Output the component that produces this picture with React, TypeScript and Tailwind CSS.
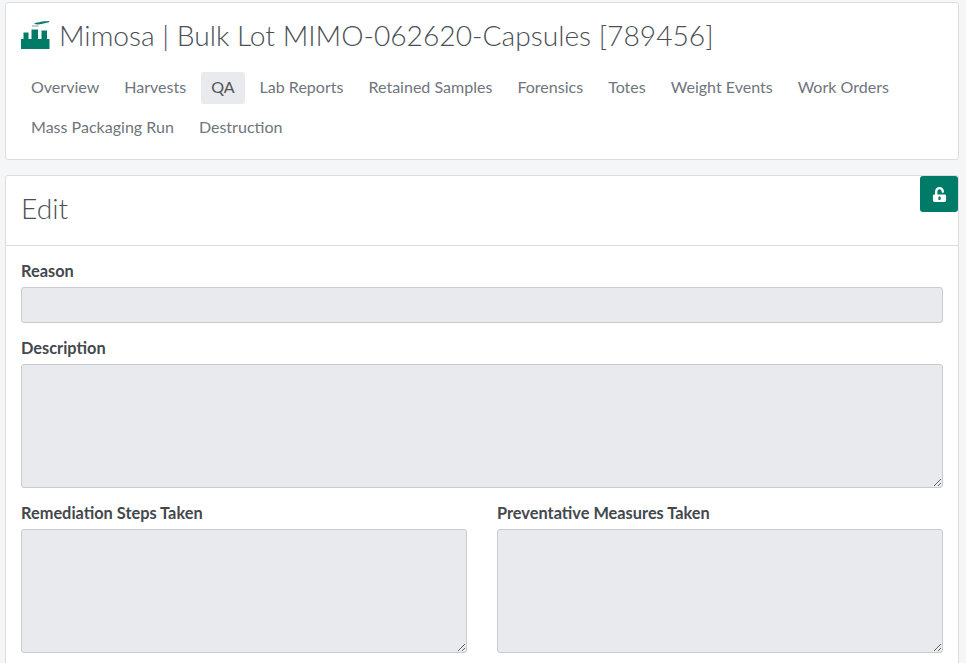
import { FaUnlockAlt } from "react-icons/fa";

const tabs = [
  "Overview",
  "Harvests",
  "QA",
  "Lab Reports",
  "Retained Samples",
  "Forensics",
  "Totes",
  "Weight Events",
  "Work Orders",
  "Mass Packaging Run",
  "Destruction",
];

function FactoryIcon() {
  return (
    <svg width="29" height="28" viewBox="0 0 29 28" className="shrink-0">
      <path fill="#007b68" d="M0 28V18h2.500V11.500h5V18h3V8.500h6.500V18h3.500V9.500h5.500V18h2.500v10z" />
      <path fill="#b4c2bf" d="M11 4.200h6.500v1.600H11z" />
      <path fill="#007b68" d="M13 2.800c2-1.600 4-1 6-1.800 3-.8 6-.8 9.500-1l-1 1.600c-3 .2-4.500 1-7 1.400-2.500.6-5 .6-7.500-.2z" />
    </svg>
  );
}

function Field({ label, height }: { label: string; height: string }) {
  return (
    <div className="flex flex-col">
      <label className="h-[24px] text-[16.35px] font-bold leading-[24px] text-[#43484d]">{label}</label>
      <textarea disabled className={`mt-[4px] block w-full rounded-[3px] border border-[#c9cbce] bg-[#e9eaed] ${height}`} />
    </div>
  );
}

export default function App() {
  return (
    <div className="h-[663px] overflow-hidden bg-[#f5f6f8] pl-[5px] pr-[7px] pt-[2px] font-['Lato',sans-serif]">
      <div className="h-[158px] rounded-[3px] border border-[#dcdde0] bg-white px-[15px] pt-[12px]">
        <div className="flex h-[40px] items-center">
          <FactoryIcon />
          <h1 className="ml-[9px] whitespace-nowrap text-[28.2px] font-light leading-[40px] text-[#4a4f55]">
            Mimosa | Bulk Lot MIMO-062620-Capsules [789456]
          </h1>
        </div>
        <nav className="mt-[17px] flex flex-wrap gap-x-[5px] text-[16.05px] text-[#6f757c]">
          {tabs.map((tab) => (
            <a
              key={tab}
              className={`mb-[8px] h-[32px] rounded-[3px] px-[10px] leading-[30px] ${tab === "QA" ? "bg-[#e9eaed] text-[#4f5459]" : ""}`}
            >
              {tab}
            </a>
          ))}
        </nav>
      </div>

      <div className="relative mt-[15px] h-[600px] rounded-[3px] border border-[#dcdde0] bg-white">
        <button className="absolute right-0 top-0 flex h-[36px] w-[38px] items-center justify-center rounded-[3px] bg-[#007b68] text-white">
          <FaUnlockAlt size={15} />
        </button>
        <div className="flex h-[70px] items-center border-b border-[#dcdde0] px-[15px] pb-[5px]">
          <h2 className="text-[28.2px] font-light text-[#4a4f55]">Edit</h2>
        </div>
        <div className="flex flex-col gap-[13px] px-[15px] pt-[13px]">
          <div className="flex flex-col">
            <label className="h-[24px] text-[16.35px] font-bold leading-[24px] text-[#43484d]">Reason</label>
            <input disabled className="mt-[4px] h-[36px] w-full rounded-[3px] border border-[#c9cbce] bg-[#e9eaed]" />
          </div>
          <Field label="Description" height="h-[124px]" />
          <div className="grid grid-cols-2 gap-x-[30px]">
            <Field label="Remediation Steps Taken" height="h-[124px]" />
            <Field label="Preventative Measures Taken" height="h-[124px]" />
          </div>
        </div>
      </div>
    </div>
  );
}
